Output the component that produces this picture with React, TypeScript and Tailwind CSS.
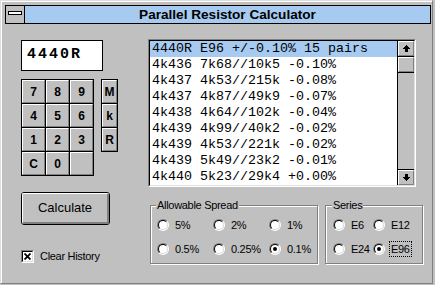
import React from "react";

const rows = [
  "4440R E96 +/-0.10% 15 pairs",
  "4k436 7k68//10k5 -0.10%",
  "4k437 4k53//215k -0.08%",
  "4k437 4k87//49k9 -0.07%",
  "4k438 4k64//102k -0.04%",
  "4k439 4k99//40k2 -0.02%",
  "4k439 4k53//221k -0.02%",
  "4k439 5k49//23k2 -0.01%",
  "4k440 5k23//29k4 +0.00%",
];

const keys = ["7", "8", "9", "4", "5", "6", "1", "2", "3", "C", "0", ""];

const bevel =
  "border border-t-white border-l-white border-b-[#808080] border-r-[#808080] bg-[#c0c0c0]";

function Radio({ checked, label, focus }: { checked?: boolean; label: string; focus?: boolean }) {
  return (
    <div className="h-[12px] flex items-center">
      <span className="w-[12px] h-[12px] shrink-0 rounded-full border border-t-[#808080] border-l-[#808080] border-b-white border-r-white flex items-center justify-center">
        <span className="w-[10px] h-[10px] rounded-full border border-t-black border-l-black border-b-[#dfdfdf] border-r-[#dfdfdf] bg-white flex items-center justify-center">
          {checked && <span className="w-[4px] h-[4px] rounded-full bg-black" />}
        </span>
      </span>
      <span
        className={`ml-[4px] px-[1px] py-[1px] leading-[12px] text-[11px] tracking-[-0.3px] whitespace-nowrap border ${
          focus ? "border-dotted border-black" : "border-transparent"
        }`}
      >
        {label}
      </span>
    </div>
  );
}

function Arrow({ down }: { down?: boolean }) {
  return (
    <svg width="7" height="7" viewBox="0 0 7 7" shapeRendering="crispEdges" className={down ? "rotate-180" : ""}>
      <rect x="3" y="0" width="1" height="1" fill="#000" />
      <rect x="2" y="1" width="3" height="1" fill="#000" />
      <rect x="1" y="2" width="5" height="1" fill="#000" />
      <rect x="0" y="3" width="7" height="1" fill="#000" />
      <rect x="2" y="4" width="3" height="3" fill="#000" />
    </svg>
  );
}

export default function App() {
  return (
    <div className="w-[435px] h-[285px] bg-[#c0c0c0] overflow-hidden text-black font-['Liberation_Sans',Arial,sans-serif]">
      <div className="w-[433px] h-[284px] border border-t-[#dfdfdf] border-l-[#dfdfdf] border-b-[#808080] border-r-[#808080]">
        <div className="h-full border-t border-l border-t-white border-l-white">
          {/* Title bar */}
          <div className="ml-[3px] mt-[3px] w-[426px] h-[19px] border border-black flex">
            <div className="w-[19px] h-full border-r border-black bg-[#c0c0c0] flex justify-center pt-[5px]">
              <div className="w-[14px] h-[4px] border border-black bg-white" />
            </div>
            <div className="flex-1 bg-[#a6caf0] flex items-center justify-center font-bold text-[13.6px] leading-none">
              Parallel Resistor Calculator
            </div>
          </div>

          {/* Client */}
          <div className="flex pl-[19px] pt-[15px]">
            {/* Left column */}
            <div className="w-[97px] pt-[1px] flex flex-col">
              <div className="w-[82px] h-[31px] border border-black bg-white flex items-center pl-[5px] font-['Liberation_Mono',monospace] font-bold text-[15px] tracking-[2px]">
                4440R
              </div>

              <div className="mt-[8px] flex items-start">
                <div className="grid grid-cols-[repeat(3,23px)] grid-rows-[repeat(4,23px)] gap-px bg-black border border-black w-[73px] h-[97px]">
                  {keys.map((k, i) => (
                    <div key={i} className={`${bevel} flex items-center justify-center font-bold text-[12px]`}>
                      {k}
                    </div>
                  ))}
                </div>
                <div className="ml-[7px] grid grid-rows-[repeat(3,23px)] gap-px bg-black border border-black w-[17px] h-[73px]">
                  {["M", "k", "R"].map((k) => (
                    <div key={k} className={`${bevel} flex items-center justify-center font-bold text-[12px]`}>
                      {k}
                    </div>
                  ))}
                </div>
              </div>

              <div className="mt-[16px] w-[89px] h-[33px] border border-black rounded-[3px] overflow-hidden">
                <div className="h-full border-t border-l border-t-white border-l-white border-b-2 border-r-2 border-b-[#808080] border-r-[#808080] flex items-center justify-center text-[13px]">
                  Calculate
                </div>
              </div>

              <div className="mt-[25px] flex items-center">
                <div className="w-[13px] h-[13px] border border-t-[#808080] border-l-[#808080] border-b-white border-r-white">
                  <div className="h-full border border-t-black border-l-black border-b-[#dfdfdf] border-r-[#dfdfdf] bg-white flex items-center justify-center">
                    <svg width="7" height="7" viewBox="0 0 7 7">
                      <path d="M0.5 0.5 L6.5 6.5 M6.5 0.5 L0.5 6.5" stroke="#000" strokeWidth="1.8" />
                    </svg>
                  </div>
                </div>
                <span className="ml-[6px] text-[11px] tracking-[-0.3px] leading-[13px]">Clear History</span>
              </div>
            </div>

            {/* Right column */}
            <div className="ml-[30px] flex flex-col">
              <div className="w-[268px] h-[148px] border border-t-[#808080] border-l-[#808080] border-b-white border-r-white">
                <div className="h-full border border-t-black border-l-black border-b-[#dfdfdf] border-r-[#dfdfdf] bg-white flex">
                  <div className="w-[247px] font-['Liberation_Mono',monospace] text-[13.333px]">
                    {rows.map((r, i) => (
                      <div
                        key={i}
                        className={`h-[16px] leading-[16px] pl-[2px] whitespace-pre ${i === 0 ? "bg-[#a6caf0]" : ""}`}
                      >
                        {r}
                      </div>
                    ))}
                  </div>
                  <div className="w-[17px] border-l border-black bg-[#c0c0c0] flex flex-col">
                    <div className="h-[16px] border-b border-black">
                      <div className={`${bevel} h-full flex items-center justify-center`}>
                        <Arrow />
                      </div>
                    </div>
                    <div className="h-[16px] border-b border-black">
                      <div className={`${bevel} h-full`} />
                    </div>
                    <div className="flex-1" />
                    <div className="h-[16px] border-t border-black">
                      <div className={`${bevel} h-full flex items-center justify-center`}>
                        <Arrow down />
                      </div>
                    </div>
                  </div>
                </div>
              </div>

              <div className="mt-[18px] pl-[2px] flex gap-[7px]">
                <div className="relative w-[168px] h-[59px] border border-[#808080] shadow-[inset_1px_1px_0_#fff,1px_1px_0_#fff]">
                  <span className="absolute left-[5px] top-[-7px] bg-[#c0c0c0] px-[1px] text-[11px] tracking-[-0.3px] leading-[13px] whitespace-nowrap">
                    Allowable Spread
                  </span>
                  <div className="grid grid-cols-[56px_56px_56px] gap-y-[12px] pl-[6px] pt-[13px]">
                    <Radio label="5%" />
                    <Radio label="2%" />
                    <Radio label="1%" />
                    <Radio label="0.5%" />
                    <Radio label="0.25%" />
                    <Radio label="0.1%" checked />
                  </div>
                </div>

                <div className="relative w-[98px] h-[59px] border border-[#808080] shadow-[inset_1px_1px_0_#fff,1px_1px_0_#fff]">
                  <span className="absolute left-[6px] top-[-7px] bg-[#c0c0c0] px-[1px] text-[11px] tracking-[-0.3px] leading-[13px]">
                    Series
                  </span>
                  <div className="grid grid-cols-[40px_40px] gap-y-[12px] pl-[7px] pt-[13px]">
                    <Radio label="E6" />
                    <Radio label="E12" />
                    <Radio label="E24" />
                    <Radio label="E96" checked focus />
                  </div>
                </div>
              </div>
            </div>
          </div>
        </div>
      </div>
    </div>
  );
}
